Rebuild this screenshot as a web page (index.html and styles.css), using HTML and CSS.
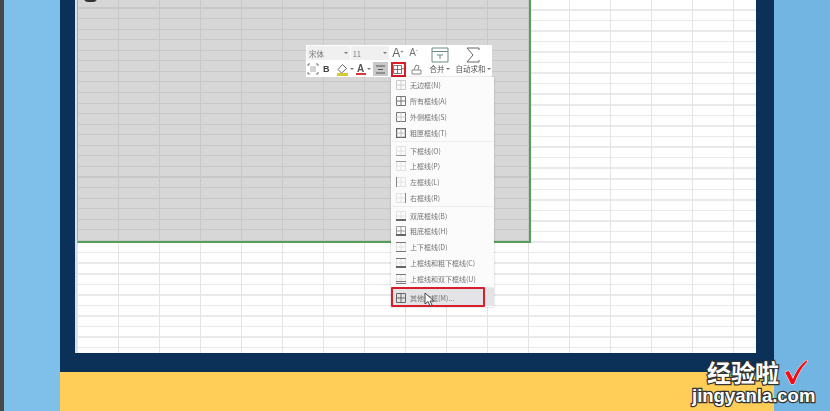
FILE: index.html
```html
<!DOCTYPE html>
<html lang="zh">
<head>
<meta charset="utf-8">
<title>其他边框</title>
<link rel="stylesheet" href="styles.css">
</head>
<body>
<div class="stage">
  <div class="strip"></div>
  <div class="side side-left"></div>
  <div class="center">
    <div class="panel">
      <div class="sheet">
        <div class="selection"><div class="blob"></div></div>
      </div>
    </div>
    <div class="footer"></div>
  </div>
  <div class="side side-right"></div>

  <div class="toolbar">
    <div class="tb-left">
      <div class="tb-row">
        <div class="combo combo-font"><span>宋体</span><i class="caret"></i></div>
        <div class="combo combo-size"><span>11</span><i class="caret"></i></div>
        <span class="grow">A<sup>+</sup></span>
        <span class="grow shrink">A<sup>-</sup></span>
      </div>
      <div class="tb-row tb-icons">
        <svg class="ic" width="12" height="12" viewBox="0 0 12 12"><path d="M1 3V1h2M9 1h2v2M11 9v2H9M3 11H1V9" fill="none" stroke="#777"/><path d="M3 4h6M3 6h6M3 8h6" stroke="#aaa"/></svg>
        <b class="bold">B</b>
        <svg class="ic fill-ic" width="13" height="13" viewBox="0 0 13 13"><path d="M6.500 1.500 2 6.500l3.500 3.500 5-4.500z" fill="none" stroke="#666"/><rect x="1" y="10" width="11" height="3" fill="#d8c832"/></svg>
        <i class="caret"></i>
        <span class="color-a">A</span>
        <i class="caret"></i>
        <span class="align"><svg width="11" height="9" viewBox="0 0 11 9"><path d="M1 1h9M3 4.500h5M1 8h9" stroke="#555"/></svg></span>
        <span class="border-btn">
          <svg width="9" height="9" viewBox="0 0 10 10"><path d="M.5.500h9v9h-9zM5 .5v9M.5 5h9" fill="none" stroke="#666"/></svg>
          <i class="caret"></i>
        </span>
        <svg class="ic eraser" width="11" height="12" viewBox="0 0 11 12"><path d="M1 7h9v4H1zM3 7l2-5 3 1-1 4" fill="none" stroke="#888"/></svg>
      </div>
    </div>
    <div class="tb-big">
      <svg width="18" height="16" viewBox="0 0 18 16"><path d="M1 1h16v14H1zM1 4.500h16" fill="none" stroke="#6a8a84"/><path d="M6 8h6M9 8v4" fill="none" stroke="#6a8a84"/></svg>
      <span>合并<i class="caret"></i></span>
    </div>
    <div class="tb-big tb-sum">
      <svg width="14" height="16" viewBox="0 0 14 16"><path d="M13 3V1H1l6 7-6 7h12v-2" fill="none" stroke="#666"/></svg>
      <span>自动求和<i class="caret"></i></span>
    </div>
  </div>

  <ul class="menu">
    <li class="item"><svg class="mi" viewBox="0 0 10 10"><path d="M.5.500h9v9h-9zM5 .5v9M.5 5h9" stroke="#ccc"/></svg>无边框(N)</li>
    <li class="item"><svg class="mi" viewBox="0 0 10 10"><path d="M.5.500h9v9h-9zM5 .5v9M.5 5h9" stroke="#777"/></svg>所有框线(A)</li>
    <li class="item"><svg class="mi" viewBox="0 0 10 10"><path d="M.5.500h9v9h-9z" stroke="#777"/><path d="M5 .5v9M.5 5h9" stroke="#ccc"/></svg>外侧框线(S)</li>
    <li class="item"><svg class="mi" viewBox="0 0 10 10"><path d="M.5.500h9v9h-9z" stroke="#666" stroke-width="1.400"/><path d="M5 .5v9M.5 5h9" stroke="#bbb"/></svg>粗匣框线(T)</li>
    <li class="item sep"><svg class="mi" viewBox="0 0 10 10"><path d="M.5.500h9v9h-9zM5 .5v9M.5 5h9" stroke="#e2e2e2"/><path d="M0 9.500h10" stroke="#999"/></svg>下框线(O)</li>
    <li class="item"><svg class="mi" viewBox="0 0 10 10"><path d="M.5.500h9v9h-9zM5 .5v9M.5 5h9" stroke="#e2e2e2"/><path d="M0 .5h10" stroke="#999"/></svg>上框线(P)</li>
    <li class="item"><svg class="mi" viewBox="0 0 10 10"><path d="M.5.500h9v9h-9zM5 .5v9M.5 5h9" stroke="#e2e2e2"/><path d="M.5 0v10" stroke="#888"/></svg>左框线(L)</li>
    <li class="item"><svg class="mi" viewBox="0 0 10 10"><path d="M.5.500h9v9h-9zM5 .5v9M.5 5h9" stroke="#e2e2e2"/><path d="M9.500 0v10" stroke="#888"/></svg>右框线(R)</li>
    <li class="item sep"><svg class="mi" viewBox="0 0 10 10"><path d="M.5.500h9v9h-9zM5 .5v9M.5 5h9" stroke="#e2e2e2"/><path d="M0 9h10" stroke="#666" stroke-width="2"/></svg>双底框线(B)</li>
    <li class="item"><svg class="mi" viewBox="0 0 10 10"><path d="M.5.500h9v9h-9zM5 .5v9M.5 5h9" stroke="#999"/><path d="M0 9h10" stroke="#666" stroke-width="2"/></svg>粗底框线(H)</li>
    <li class="item"><svg class="mi" viewBox="0 0 10 10"><path d="M.5.500h9v9h-9zM5 .5v9M.5 5h9" stroke="#e2e2e2"/><path d="M0 .5h10M0 9.500h10" stroke="#777"/></svg>上下框线(D)</li>
    <li class="item"><svg class="mi" viewBox="0 0 10 10"><path d="M.5.500h9v9h-9zM5 .5v9M.5 5h9" stroke="#e2e2e2"/><path d="M0 .5h10" stroke="#777"/><path d="M0 9h10" stroke="#666" stroke-width="2"/></svg>上框线和粗下框线(C)</li>
    <li class="item"><svg class="mi" viewBox="0 0 10 10"><path d="M.5.500h9v9h-9zM5 .5v9M.5 5h9" stroke="#e2e2e2"/><path d="M0 .5h10M0 7.500h10M0 9.500h10" stroke="#777"/></svg>上框线和双下框线(U)</li>
    <li class="item sep item-hover"><svg class="mi" viewBox="0 0 10 10"><path d="M.5.500h9v9h-9zM5 .5v9M.5 5h9" stroke="#666"/></svg>其他边框(M)...</li>
  </ul>
  <div class="red-box"></div>
  <svg class="cursor" width="12" height="16" viewBox="0 0 12 16"><path d="M1 1v11l3-2.500L6 14l2-1-2-4h4z" fill="#fff" stroke="#444"/></svg>

  <div class="mark">
    <div class="mark-cn">经验啦<svg class="check" width="24" height="26" viewBox="0 0 24 26"><path d="M1 13l4-1 4 8C12 12 17 5 23 1l0 2C17 9 13 17 10 25H7z" fill="#f40d12" stroke="#fff"/></svg></div>
    <div class="mark-en">jingyanla.com</div>
  </div>
</div>
</body>
</html>
```

FILE: styles.css
```css
* { box-sizing: border-box; }
html, body { margin: 0; padding: 0; }
body { width: 830px; height: 411px; overflow: hidden; font-family: "Noto Sans CJK SC", "Liberation Sans", sans-serif; }

.stage { position: relative; display: flex; width: 830px; height: 411px; }
.strip { width: 4px; background: #4a4a4c; }
.side { width: 56px; }
.side-left { background: #7fc0ea; }
.side-right { background: #72b4e2; }

.center { width: 714px; display: flex; flex-direction: column; }
.panel { height: 372px; background: #0b3159; padding: 0 18px 19px 15px; }
.footer { flex: 1; background: #ffce58; }

.sheet {
  position: relative;
  height: 353px;
  background-color: #fff;
  background-image:
    linear-gradient(90deg, #e4e4e6 1px, transparent 1px),
    repeating-linear-gradient(180deg, transparent 0 9px, #e9e9eb 9px 10.560px);
  background-size: 41px 100%, 100% 100%;
  background-position: 0 0, 0 0;
  border-left: 2px solid #dcdfe9;
}
.selection {
  position: absolute;
  left: 0;
  top: -2px;
  width: 454px;
  height: 245px;
  border: 1px solid #8fbb93;
  border-top: 0;
  border-right: 2px solid #559e5c;
  border-bottom: 2px solid #559e5c;
  background-color: #d7d7d7;
  background-image:
    linear-gradient(90deg, #c8c8c8 1px, transparent 1px),
    repeating-linear-gradient(180deg, transparent 0 9.500px, #c8c8c8 9.500px 10.560px);
  background-size: 41px 100%, 100% 100%;
  background-position: 40px 0, 0 0;
}
.blob { position: absolute; left: 6px; top: 0; width: 13px; height: 4px; background: #333; border-radius: 0 0 7px 7px; }

.toolbar {
  position: absolute;
  left: 306px;
  top: 45px;
  width: 186px;
  height: 32px;
  display: flex;
  background: #fff;
  color: #555;
  font-size: 7.500px;
  filter: blur(.4px);
}
.tb-left { width: 119px; display: flex; flex-direction: column; padding-left: 1px; }
.tb-row { display: flex; align-items: center; height: 16px; gap: 1px; }
.combo { display: flex; align-items: center; justify-content: space-between; height: 14px; padding: 0 2px; background: #f0f0f0; color: #777; }
.combo-font { width: 43px; }
.combo-size { width: 39px; }
.grow { font-size: 12px; width: 16px; margin-left: 2px; line-height: 14px; color: #666; font-family: "Liberation Sans", sans-serif; white-space: nowrap; }
.grow sup { font-size: 6px; vertical-align: 4px; line-height: 0; }
.shrink { font-size: 10px; color: #777; margin-left: 0; }
.tb-icons { gap: 0; }
.ic { flex: none; }
.bold { font: bold 9px "Liberation Sans", sans-serif; margin-left: 4px; color: #444; }
.fill-ic { margin-left: 6px; }
.eraser { margin-left: 5px; }
.caret { display: inline-block; flex: none; width: 0; height: 0; margin-left: 1px; border: 2px solid transparent; border-top: 2px solid #777; border-bottom: 0; }
.color-a { font: bold 10px/12px "Liberation Sans", sans-serif; color: #555; border-bottom: 2px solid #d8343a; height: 12px; width: 10px; text-align: center; margin-left: 2px; }
.align { display: flex; align-items: center; justify-content: center; flex: none; width: 15px; height: 14px; background: #c9c9c9; margin-left: 2px; }
.border-btn { display: flex; align-items: center; justify-content: flex-start; flex: none; width: 15px; height: 15px; border: 2px solid #d81e28; margin-left: 3px; padding-left: 0; }
.border-btn svg { flex: none; }
.border-btn .caret { margin-left: 0; border-width: 1.500px; border-top-width: 2px; border-bottom: 0; }
.tb-big { width: 29px; display: flex; flex-direction: column; align-items: center; padding-top: 2px; white-space: nowrap; }
.tb-big span { line-height: 11px; display: flex; align-items: center; }
.tb-sum { width: 38px; }

.menu {
  position: absolute;
  left: 391px;
  top: 77px;
  width: 103px;
  margin: 0;
  padding: 0 0 1px;
  list-style: none;
  background: #fbfbfb;
  color: #727272;
  font-size: 7px;
  box-shadow: 0 0 2px rgba(0,0,0,.25);
  filter: blur(.4px);
}
.item { display: flex; align-items: center; gap: 4px; height: 16px; padding-left: 5px; white-space: nowrap; line-height: 10px; }
.sep { height: 17px; padding-top: 1px; border-top: 1px solid #eee; }
.item-hover { height: 19px; background: #e4e4e6; }
.mi { flex: none; width: 10px; height: 10px; fill: none; }

.red-box { position: absolute; left: 391px; top: 287px; width: 94px; height: 20px; border: 2px solid #d5202c; border-radius: 1px; }
.cursor { position: absolute; left: 424px; top: 292px; }

.mark { position: absolute; left: 692px; top: 358px; width: 130px; color: #fff; font-weight: 700; }
.mark-cn {
  display: flex;
  align-items: center;
  height: 28px;
  padding-left: 15px;
  font-size: 24px;
  line-height: 28px;
  font-family: "Noto Sans CJK SC", sans-serif;
  -webkit-text-stroke: 2.500px #333;
  paint-order: stroke fill;
}
.check { margin-left: 5px; }
.mark-en {
  font: bold 18.500px/20px "Liberation Sans", sans-serif;
  -webkit-text-stroke: 2.500px #333;
  paint-order: stroke fill;
  white-space: nowrap;
}
```
